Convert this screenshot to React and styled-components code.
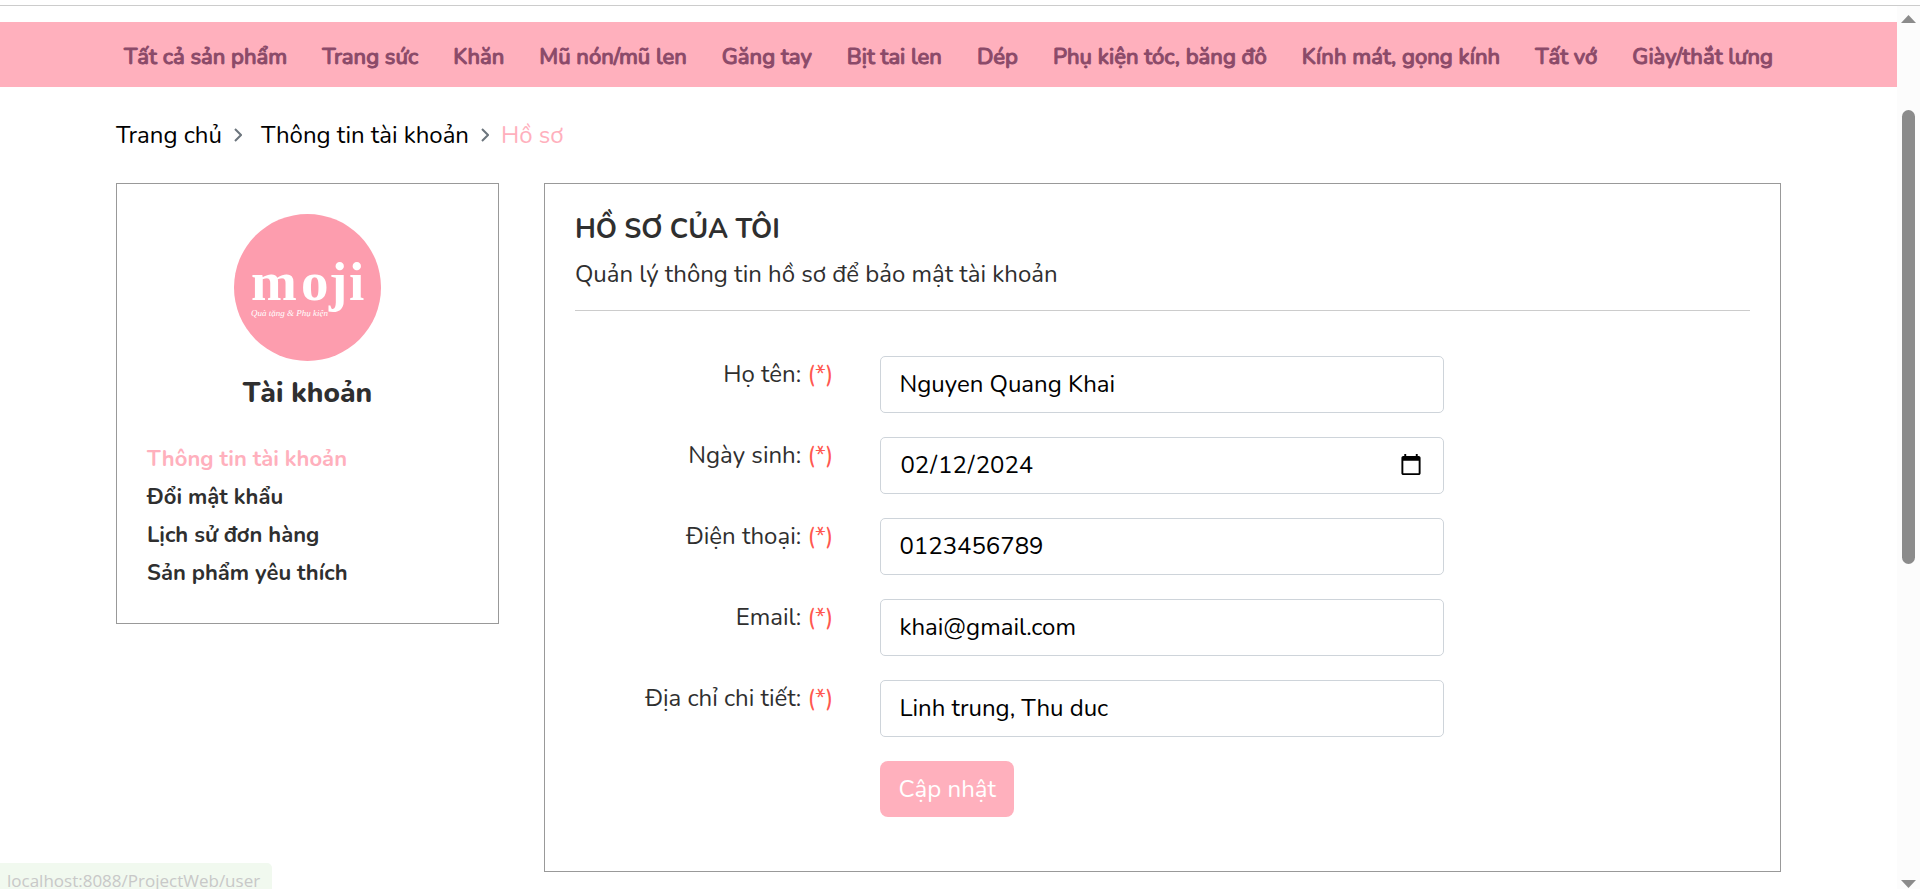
import React from 'react';
import styled, { createGlobalStyle } from 'styled-components';

const GlobalStyle = createGlobalStyle`
  *, *::before, *::after { box-sizing: border-box; }
  body {
    margin: 0;
    background: #fff;
    color: #2f2f2f;
    font-family: Nunito, Lato, "Noto Sans", sans-serif;
    font-size: 24px;
    line-height: 36px;
  }
  a { color: inherit; text-decoration: none; }
  ul, ol { list-style: none; margin: 0; padding: 0; }
  h1, h2, p { margin: 0; }
`;

const Shell = styled.div`
  display: flex;
  align-items: flex-start;
  border-top: 1px solid #ccc;
  margin-top: 5px;
`;

const Page = styled.div`
  flex: 1;
  min-width: 0;
  padding: 16px 0;
`;

const Container = styled.div`
  width: 88%;
  max-width: 1665px;
  margin: 0 auto;
`;

const NavBar = styled.nav`
  background: #ffb0bd;
  color: #8b4a69;
  font-size: 22px;
  font-weight: 500;
  -webkit-text-stroke: 1px #8b4a69;
`;

const NavList = styled.ul`
  display: flex;
  justify-content: space-between;
  padding: 17px 8px 12px;
  white-space: nowrap;
`;

const Breadcrumb = styled.ol`
  display: flex;
  align-items: center;
  gap: 12px;
  padding: 30px 0;
  color: #000;
`;

const Crumb = styled.li`
  display: flex;
  align-items: center;
  gap: 12px;
  color: ${(p) => (p.$current ? '#ffb0bd' : 'inherit')};

  &:first-child {
    margin-right: 7px;
  }
`;

const Columns = styled.div`
  display: grid;
  grid-template-columns: 23fr 74.3fr;
  column-gap: 45px;
  align-items: start;
`;

const Card = styled.section`
  border: 1px solid #999;
  padding: ${(p) => p.$padding};
`;

const Logo = styled.svg`
  display: block;
  width: 147px;
  height: 147px;
  margin: 0 auto;
`;

const SideTitle = styled.h2`
  margin-top: 14px;
  font-size: 28px;
  font-weight: 800;
  text-align: center;
`;

const Title = styled.h1`
  font-size: 27px;
  line-height: 36px;
`;

const Menu = styled.ul`
  margin-top: 29px;
  font-size: 22px;
  font-weight: 700;
  line-height: 38px;
`;

const MenuLink = styled.a`
  color: ${(p) => (p.$active ? '#ffb0bd' : 'inherit')};
`;

const Subtitle = styled.p`
  margin-top: 8px;
  padding-bottom: 18px;
  border-bottom: 1px solid #ccc;
`;

const Form = styled.form`
  display: grid;
  gap: 24px;
  margin-top: 45px;
`;

const Field = styled.div`
  display: grid;
  grid-template-columns: 22% 48%;
  column-gap: 4%;
`;

const Label = styled.label`
  text-align: right;
  white-space: nowrap;
`;

const Required = styled.span`
  color: #ff5850;
`;

const Input = styled.input`
  width: 100%;
  height: 57px;
  padding: 0 18px 2px;
  border: 1px solid #ced4da;
  border-radius: 5px;
  background: #fff;
  color: #000;
  font: inherit;
`;

const Submit = styled.button`
  grid-column: 2;
  justify-self: start;
  height: 56px;
  padding: 0 18px;
  border: 0;
  border-radius: 8px;
  background: #ffb0bd;
  color: #fff;
  font: inherit;
`;

const ScrollRail = styled.div`
  position: sticky;
  top: 0;
  flex: 0 0 23px;
  height: calc(100vh - 6px);
  display: flex;
  flex-direction: column;
  align-items: center;
  background: #fcfcfc;
  padding: 9px 0 1px;
`;

const Thumb = styled.div`
  width: 13px;
  flex: 0 0 52%;
  margin: 87px 0 auto;
  border-radius: 7px;
  background: #8b8b8b;
`;

const StatusBar = styled.div`
  position: fixed;
  left: 0;
  bottom: 0;
  height: 26px;
  padding: 5px 12px 0 7px;
  overflow: hidden;
  border-top-right-radius: 5px;
  background: #f1f9ef;
  color: #c8c8c8;
  font: 17px/26px "Open Sans", sans-serif;
`;

const categories = [
  'Tất cả sản phẩm', 'Trang sức', 'Khăn', 'Mũ nón/mũ len', 'Găng tay', 'Bịt tai len',
  'Dép', 'Phụ kiện tóc, băng đô', 'Kính mát, gọng kính', 'Tất vớ', 'Giày/thắt lưng',
];

const menu = ['Thông tin tài khoản', 'Đổi mật khẩu', 'Lịch sử đơn hàng', 'Sản phẩm yêu thích'];

const fields = [
  { id: 'name', label: 'Họ tên:', type: 'text', value: 'Nguyen Quang Khai' },
  { id: 'birthday', label: 'Ngày sinh:', type: 'date', value: '2024-02-12' },
  { id: 'phone', label: 'Điện thoại:', type: 'tel', value: '0123456789' },
  { id: 'email', label: 'Email:', type: 'email', value: 'khai@gmail.com' },
  { id: 'address', label: 'Địa chỉ chi tiết:', type: 'text', value: 'Linh trung, Thu duc' },
];

const Chevron = () => (
  <svg width="8" height="14" viewBox="0 0 8 14" fill="none" stroke="#6c757d" strokeWidth="2" aria-hidden="true">
    <path d="M1 1l6 6-6 6" />
  </svg>
);

const Arrow = ({ down }) => (
  <svg width="15" height="8" viewBox="0 0 15 8" fill="#8b8b8b" aria-hidden="true">
    <path d={down ? 'M0 0h15L7.500 8z' : 'M0 8h15L7.500 0z'} />
  </svg>
);

const MojiLogo = () => (
  <Logo viewBox="0 0 147 147" role="img" aria-label="moji">
    <circle cx="73.5" cy="73.5" r="73.5" fill="#fd9dae" />
    <g fill="#fff">
      <text x="17 67 95 115" y="86" fontFamily="Liberation Serif, serif" fontWeight="700" fontSize="55">moji</text>
      <text x="17" y="102" fontFamily="Liberation Serif, serif" fontStyle="italic" fontSize="9">Quà tặng &amp; Phụ kiện</text>
    </g>
  </Logo>
);

export default function App() {
  return (
    <>
      <GlobalStyle />
      <Shell>
        <Page>
          <NavBar>
            <Container>
              <NavList>
                {categories.map((c) => <li key={c}><a href="#">{c}</a></li>)}
              </NavList>
            </Container>
          </NavBar>
          <Container>
            <Breadcrumb>
              <Crumb><a href="#">Trang chủ</a><Chevron /></Crumb>
              <Crumb><a href="#">Thông tin tài khoản</a><Chevron /></Crumb>
              <Crumb $current>Hồ sơ</Crumb>
            </Breadcrumb>
            <Columns>
              <Card $padding="30px 30px 31px">
                <MojiLogo />
                <SideTitle>Tài khoản</SideTitle>
                <Menu>
                  {menu.map((m, i) => (
                    <li key={m}><MenuLink href="#" $active={i === 0}>{m}</MenuLink></li>
                  ))}
                </Menu>
              </Card>
              <Card $padding="28px 30px 54px">
                <Title>HỒ SƠ CỦA TÔI</Title>
                <Subtitle>Quản lý thông tin hồ sơ để bảo mật tài khoản</Subtitle>
                <Form onSubmit={(e) => e.preventDefault()}>
                  {fields.map((f) => (
                    <Field key={f.id}>
                      <Label htmlFor={f.id}>{f.label} <Required>(*)</Required></Label>
                      <Input id={f.id} type={f.type} defaultValue={f.value} />
                    </Field>
                  ))}
                  <Field><Submit type="submit">Cập nhật</Submit></Field>
                </Form>
              </Card>
            </Columns>
          </Container>
        </Page>
        <ScrollRail>
          <Arrow />
          <Thumb />
          <Arrow down />
        </ScrollRail>
      </Shell>
      <StatusBar>localhost:8088/ProjectWeb/user</StatusBar>
    </>
  );
}
